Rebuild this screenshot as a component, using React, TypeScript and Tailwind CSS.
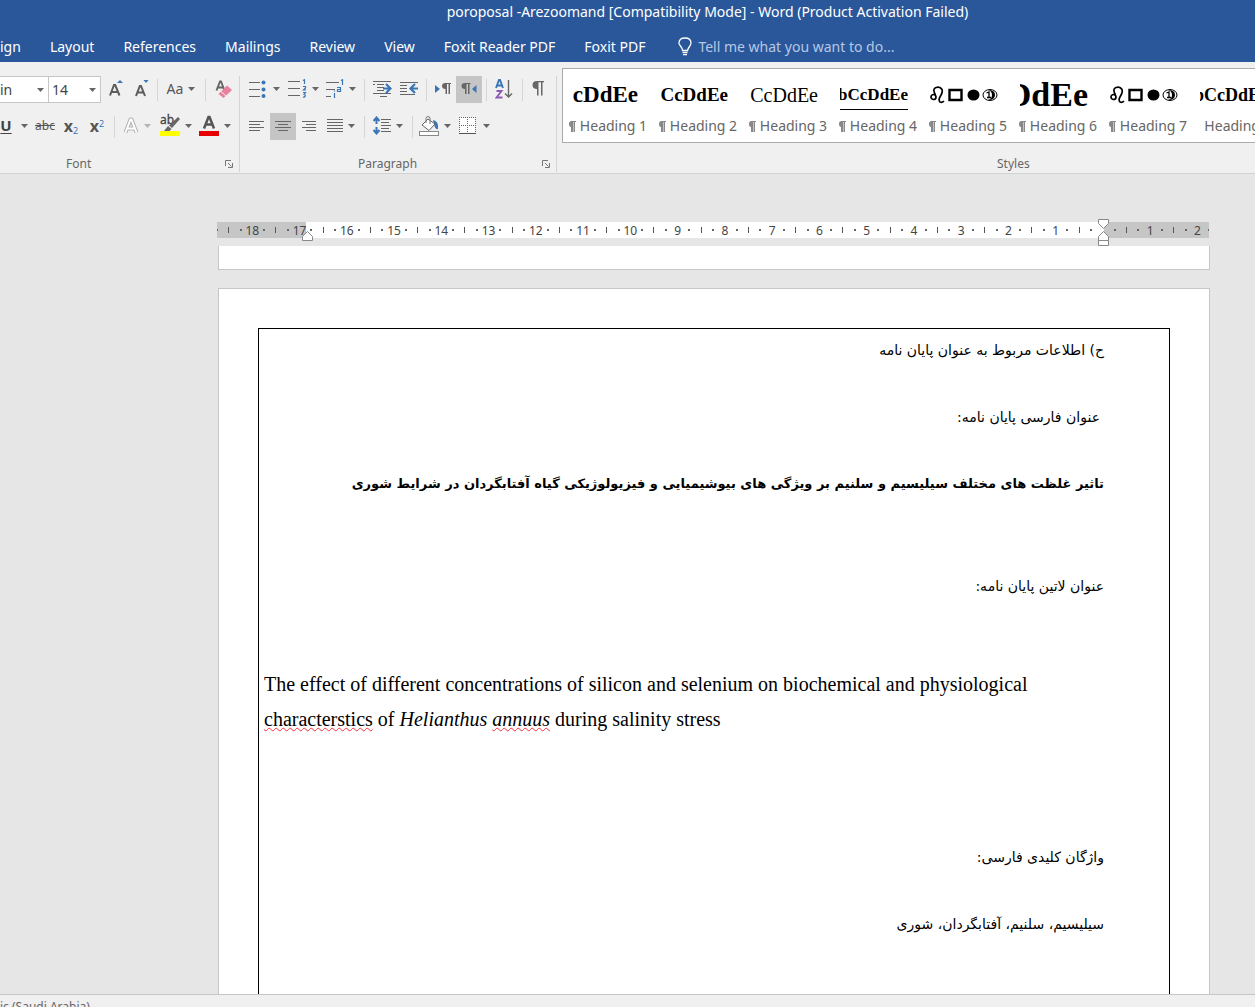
import type { ReactNode } from "react";
import clsx from "clsx";

const tabs = ["ign", "Layout", "References", "Mailings", "Review", "View", "Foxit Reader PDF", "Foxit PDF"];

const rulerNumbers = [18, 17, 16, 15, 14, 13, 12, 11, 10, 9, 8, 7, 6, 5, 4, 3, 2, 1, 0, 1, 2];

const styles = [
  { name: "Heading 1", preview: "cDdEe", look: "text-[23px] font-bold", mark: true },
  { name: "Heading 2", preview: "CcDdEe", look: "text-[19px] font-bold", mark: true },
  { name: "Heading 3", preview: "CcDdEe", look: "text-[20px]", mark: true },
  { name: "Heading 4", preview: "bCcDdEe", look: "text-[17px] font-bold border-b border-black", mark: true },
  { name: "Heading 5", preview: "symbols", look: "", mark: true },
  { name: "Heading 6", preview: "DdEe", look: "text-[34px] font-bold", mark: true },
  { name: "Heading 7", preview: "symbols", look: "", mark: true },
  { name: "Heading 8", preview: "bCcDdEe", look: "text-[18px] font-bold", mark: false },
];

function Caret({ dim = false }: { dim?: boolean }) {
  return (
    <svg width="7" height="4" viewBox="0 0 7 4" className={clsx("shrink-0", dim ? "fill-[#b5b5b5]" : "fill-[#666]")}>
      <path d="M0 0h7L3.500 4z" />
    </svg>
  );
}

function Tool({ label, className, active, children }: { label: string; className: string; active?: boolean; children: ReactNode }) {
  return (
    <button
      type="button"
      aria-label={label}
      aria-pressed={active}
      className={clsx("flex h-[27px] shrink-0 items-center justify-center pb-[2px]", active && "bg-[#c5c5c5]", className)}
    >
      {children}
    </button>
  );
}

function Separator() {
  return (
    <div className="flex w-2 shrink-0 justify-center">
      <div className="h-[22px] w-px bg-[#d5d5d5]" />
    </div>
  );
}

// Horizontal strokes used by the alignment icons
function Lines({ rows, width = 16, height = 14 }: { rows: number[][]; width?: number; height?: number }) {
  return (
    <svg width={width} height={height} viewBox={`0 0 ${width} ${height}`} fill="#666">
      {rows.map(([x, y, w]) => (
        <rect key={`${x}-${y}`} x={x} y={y} width={w} height="1" />
      ))}
    </svg>
  );
}

function Launcher({ label }: { label: string }) {
  return (
    <button type="button" aria-label={label} className="flex size-4 items-center justify-center">
      <svg width="8" height="8" viewBox="0 0 8 8" fill="none" stroke="#777">
        <path d="M.5 6V.5H6M3 3l3.500 3.500M7.500 3v4.500H3" />
      </svg>
    </button>
  );
}

function FontGroup() {
  return (
    <section className="flex w-60 shrink-0 flex-col border-r border-[#d5d5d5]">
      <div className="flex h-[27px] items-center">
        <div className="relative h-full w-[49px] border-y border-r border-[#c6c6c6] bg-white">
          <select aria-label="Font" className="h-full w-full appearance-none text-[14px] text-[#444]">
            <option>in</option>
          </select>
          <span className="pointer-events-none absolute inset-y-0 right-1 flex items-center">
            <Caret />
          </span>
        </div>
        <div className="relative h-full w-[52px] border-y border-r border-[#c6c6c6] bg-white">
          <select aria-label="Font size" className="h-full w-full appearance-none pl-[3px] text-[14px] text-[#444]">
            <option>14</option>
          </select>
          <span className="pointer-events-none absolute inset-y-0 right-1 flex items-center">
            <Caret />
          </span>
        </div>
        <Tool label="Increase font size" className="w-[30px]">
          <svg width="14" height="17" viewBox="0 0 14 17">
            <path d="M1 15.500 5 5h1.200L10.500 15.500M2.500 12h6.500" fill="none" stroke="#5c5c5c" strokeWidth="2" />
            <path d="M8 3h6l-3-3z" fill="#3a76b5" />
          </svg>
        </Tool>
        <Tool label="Decrease font size" className="w-[22px]">
          <svg width="14" height="17" viewBox="0 0 14 17">
            <path d="M1 16 4.800 6h1.200L10 16M2.300 12.500h6.200" fill="none" stroke="#5c5c5c" strokeWidth="2" />
            <path d="M8.500 0h5L11 3z" fill="#3a76b5" />
          </svg>
        </Tool>
        <Separator />
        <Tool label="Change case" className="w-10 gap-[5px] text-[14px] text-[#555]">
          Aa
          <Caret />
        </Tool>
        <Separator />
        <Tool label="Clear formatting" className="w-[30px]">
          <svg width="18" height="18" viewBox="0 0 18 18">
            <path d="M1.500 10.500 5 1.500h1l3.500 9M3 7.500h5" fill="none" stroke="#666" strokeWidth="1.900" />
            <path d="m3.500 14 8.500-8.500 5 4.500-8.500 8z" fill="#e8829c" />
            <path d="m6 11.500 5 4.500" stroke="#f0f0f0" />
          </svg>
        </Tool>
      </div>

      <div className="mt-[10px] flex h-[27px] items-center">
        <Tool label="Underline" className="w-3 text-[15px] font-bold text-[#444] underline underline-offset-2">
          U
        </Tool>
        <Tool label="Underline options" className="w-5 pl-1">
          <Caret />
        </Tool>
        <Tool label="Strikethrough" className="w-[26px] text-[12px] text-[#555] line-through">
          abc
        </Tool>
        <Tool label="Subscript" className="w-[26px]">
          <span className="text-[16px] leading-4 font-bold text-[#555]">
            x<sub className="text-[9px] font-normal text-[#3a76b5]">2</sub>
          </span>
        </Tool>
        <Tool label="Superscript" className="w-[26px]">
          <span className="text-[16px] leading-4 font-bold text-[#555]">
            x<sup className="text-[9px] font-normal text-[#3a76b5]">2</sup>
          </span>
        </Tool>
        <Separator />
        <Tool label="Text effects" className="w-[38px] gap-[5px]">
          <svg width="16" height="18" viewBox="0 0 16 18" fill="none" strokeLinejoin="round">
            <path d="M2.500 15.500 7.500 2.500h1l5 13M4.500 11.500h7" stroke="#b3b3b3" strokeWidth="4" />
            <path d="M2.500 15.500 7.500 2.500h1l5 13M4.500 11.500h7" stroke="#fff" strokeWidth="2" />
          </svg>
          <Caret dim />
        </Tool>
        <Tool label="Highlight" className="w-10 gap-[5px]">
          <svg width="20" height="21" viewBox="0 0 20 21" className="overflow-visible">
            <text x="0" y="9" fontSize="12" fill="#444" stroke="#444" strokeWidth=".3">ab</text>
            <path d="m18 2 2 2-8 9-3-2.500zM8 11l3.500 3L9.500 16H4z" fill="#666" />
            <rect y="16" width="20" height="5" fill="#ff0" />
          </svg>
          <Caret />
        </Tool>
        <Tool label="Font colour" className="w-[38px] gap-[5px]">
          <svg width="20" height="21" viewBox="0 0 20 21">
            <path d="M5 13.500 9.500 2h1L15 13.500M6.500 9.500h7" fill="none" stroke="#555" strokeWidth="2.500" />
            <rect y="16" width="20" height="5" fill="#e80000" />
          </svg>
          <Caret />
        </Tool>
      </div>

      <div className="mt-auto flex items-center justify-between pr-[2px] pl-[66px] text-[12px] leading-4 text-[#666]">
        Font
        <Launcher label="Font settings" />
      </div>
    </section>
  );
}

function ParagraphGroup() {
  return (
    <section className="flex w-[317px] shrink-0 flex-col border-r border-[#d5d5d5]">
      <div className="flex h-[27px] items-center pl-1">
        <Tool label="Bullets" className="w-10 gap-[6px]">
          <svg width="18" height="18" viewBox="0 0 18 18">
            <path d="M0 2.500h11M0 9.500h11M0 16.500h11" stroke="#666" />
            <g fill="#3a76b5">
              <circle cx="14.500" cy="2.500" r="2" />
              <circle cx="14.500" cy="9.500" r="2" />
              <circle cx="14.500" cy="16" r="2" />
            </g>
          </svg>
          <Caret />
        </Tool>
        <Tool label="Numbering" className="w-[38px] gap-[5px]">
          <svg width="19" height="19" viewBox="0 0 19 19" fill="none">
            <path d="M0 2.500h12M0 9.500h12M0 16.500h12" stroke="#666" />
            <path
              d="M15 1.500 16.500.7V5M15 7.500h2.500v1.500L15.500 11H18M15 13.500h2.500l-1.500 2q2 .5 1 2-1 1-2 .5"
              stroke="#3a76b5"
              strokeWidth="1.200"
            />
          </svg>
          <Caret />
        </Tool>
        <Tool label="Multilevel list" className="w-[38px] gap-[5px]">
          <svg width="18" height="20" viewBox="0 0 18 20" fill="none">
            <path d="M0 3.500h13M0 10.500h9M0 17.500h5" stroke="#666" />
            <path
              d="M15 1.500 16.500.7V6M11 8.500h3.500V12.500H11.500V10.500h3M8.500 14v5M8.500 11.500v1"
              stroke="#3a76b5"
              strokeWidth="1.200"
            />
          </svg>
          <Caret />
        </Tool>
        <Separator />
        <Tool label="Decrease indent" className="w-7">
          <svg width="19" height="16" viewBox="0 0 19 16" fill="none">
            <path d="M0 .5h18M4 3.500h7M4 6.500h7M4 9.500h7M0 12.500h18M7 15.500h7M0 3.500h2" stroke="#666" />
            <path d="M10 7.500h7M13 3l4.500 4.500L13 12" stroke="#3a76b5" strokeWidth="2.200" />
          </svg>
        </Tool>
        <Tool label="Increase indent" className="w-[26px]">
          <svg width="19" height="16" viewBox="0 0 19 16" fill="none">
            <path d="M0 1.500h18M0 4.500h7M0 7.500h7M0 10.500h7M0 13.500h15" stroke="#666" />
            <path d="M18 7.500h-7M15 3l-4.500 4.500L15 12" stroke="#3a76b5" strokeWidth="2.200" />
          </svg>
        </Tool>
        <Separator />
        <Tool label="Left-to-right" className="w-[26px]">
          <svg width="16" height="12" viewBox="0 0 16 12">
            <path d="M0 2v8l5-4z" fill="#3a76b5" />
            <path d="M10.500 6Q7 6 7 3t3.500-3H16v1h-1v10h-1.500V1H12v10h-1.500z" fill="#666" />
          </svg>
        </Tool>
        <Tool label="Right-to-left" className="w-[26px]" active>
          <svg width="16" height="12" viewBox="0 0 16 12">
            <path d="M15.500 2v8L11 6z" fill="#3a76b5" />
            <path d="M4 6Q.5 6 .5 3T4 0h5.500v1h-1v10H7V1H5.500v10H4z" fill="#666" />
          </svg>
        </Tool>
        <Separator />
        <Tool label="Sort" className="w-7">
          <svg width="18" height="20" viewBox="0 0 18 20" fill="none">
            <path d="M1 9 4 1h1l3 8M2 6.500h5" stroke="#3a76b5" strokeWidth="1.900" />
            <path d="M1.500 12h5l-5 6.500h6" stroke="#8e58b5" strokeWidth="1.900" />
            <path d="M13.500 1v17M10 14.500l3.500 3.500 3.500-3.500" stroke="#666" strokeWidth="1.400" />
          </svg>
        </Tool>
        <Separator />
        <Tool label="Show paragraph marks" className="w-6">
          <svg width="12" height="15" viewBox="0 0 12 15">
            <path d="M5 8Q.5 8 .5 4T5 0h7v1.200h-1.500V14.500H9V1.200H6.500V14.500H5z" fill="#666" />
          </svg>
        </Tool>
      </div>

      <div className="mt-[10px] flex h-[27px] items-center pl-1">
        <Tool label="Align left" className="w-[26px]">
          <Lines rows={[[0, 1, 15], [0, 4, 11], [0, 7, 15], [0, 10, 11]]} height={12} />
        </Tool>
        <Tool label="Centre" className="w-[26px]" active>
          <Lines rows={[[0, 1, 16], [3, 4, 10], [0, 7, 16], [3, 10, 10]]} height={12} />
        </Tool>
        <Tool label="Align right" className="w-[26px]">
          <Lines rows={[[1, 1, 14], [5, 4, 10], [1, 7, 14], [5, 10, 10]]} height={12} />
        </Tool>
        <Tool label="Justify" className="w-[38px] gap-[5px]">
          <Lines rows={[[0, 0, 16], [0, 3, 16], [0, 6, 16], [0, 9, 16], [0, 12, 16]]} height={14} />
          <Caret />
        </Tool>
        <Separator />
        <Tool label="Line spacing" className="w-10 gap-[5px]">
          <svg width="18" height="19" viewBox="0 0 18 19" fill="none">
            <path d="M3.500 1.500V8M.5 5l3-3.500 3 3.500M3.500 11v6.500M.5 14l3 3.500 3-3.500" stroke="#3a76b5" strokeWidth="2" />
            <path d="M8 3.500h10M8 6.500h8M8 9.500h10M8 12.500h8M8 15.500h10" stroke="#666" />
          </svg>
          <Caret />
        </Tool>
        <Separator />
        <Tool label="Shading" className="w-[38px] gap-[5px]">
          <svg width="20" height="20" viewBox="0 0 20 20">
            <path d="M14 4q6 1 5 9-3 1-4-5z" fill="#3a76b5" />
            <path d="m3 9 6-6 7 5-6 6.500z" fill="#fff" stroke="#666" />
            <path d="M7 7V2.500Q7 .5 9 .5t2 2V8" fill="none" stroke="#777" />
            <rect x=".5" y="15.500" width="19" height="4" fill="#fff" stroke="#888" />
          </svg>
          <Caret />
        </Tool>
        <Tool label="Borders" className="w-10 gap-[7px]">
          <svg width="17" height="17" viewBox="0 0 17 17" fill="none">
            <path d="M.5.5h16v15H.5z" fill="#fff" />
            <path d="M0 .5h17M0 8.500h17M.5 0v16M8.500 0v16M16.500 0v16" stroke="#666" strokeDasharray="1 1" />
            <path d="M0 16.500h17" stroke="#555" />
          </svg>
          <Caret />
        </Tool>
      </div>

      <div className="mt-auto flex items-center justify-between pr-[2px] pl-[118px] text-[12px] leading-4 text-[#666]">
        Paragraph
        <Launcher label="Paragraph settings" />
      </div>
    </section>
  );
}

function StylePreview({ preview, look }: { preview: string; look: string }) {
  if (preview === "symbols") {
    return (
      <span className="flex w-[68px] items-center justify-between text-black">
        <svg width="16" height="18" viewBox="0 0 16 18" fill="none" stroke="currentColor" strokeWidth="1.700">
          <circle cx="3.500" cy="11" r="2.500" />
          <path d="M5.500 9Q2 3 6 1.500t6 2Q13 6 10.500 10T10 16q2 1 4-1" />
        </svg>
        <svg width="16" height="14" viewBox="0 0 16 14" fill="none" stroke="currentColor" strokeWidth="2.400">
          <path d="M1.500 2h12v10h-12z" />
        </svg>
        <svg width="13" height="14" viewBox="0 0 13 14">
          <ellipse cx="6.500" cy="7" rx="6" ry="5.500" />
        </svg>
        <svg width="16" height="14" viewBox="0 0 16 14" fill="none" stroke="currentColor">
          <ellipse cx="8" cy="7" rx="7" ry="5.500" />
          <path d="M6 2q4 1 4 5t-4 5q7 0 7-5T6 2z" fill="currentColor" stroke="none" />
          <path d="M4.500 5 7 4v6M5 9.500h4" strokeWidth="1.300" />
        </svg>
      </span>
    );
  }
  return (
    <span
      className={clsx("flex w-[68px] justify-end overflow-hidden font-['Liberation_Serif',serif] leading-7 whitespace-nowrap text-black", look)}
    >
      {preview}
    </span>
  );
}

function StylesGroup() {
  return (
    <section className="flex min-w-0 flex-1 flex-col pl-[5px]">
      <div className="-mt-2 flex h-[75px] overflow-hidden border-y border-l border-[#ababab] bg-white">
        {styles.map((s) => (
          <button key={s.name} type="button" className="flex w-[90px] shrink-0 flex-col items-center pt-[11px]">
            <span className="flex h-[30px] items-center pr-2">
              <StylePreview preview={s.preview} look={s.look} />
            </span>
            <span className="mt-[6px] flex items-center gap-1 text-[14px] leading-5 whitespace-nowrap text-[#666]">
              {s.mark && (
                <svg width="7" height="11" viewBox="0 0 7 11" fill="#888">
                  <path d="M2 6Q0 6 0 3t2.500-3H7v1H6v10H4.500V1H4v10H2z" />
                </svg>
              )}
              {s.name}
            </span>
          </button>
        ))}
      </div>
      <div className="mt-auto pl-[435px] text-[12px] leading-4 text-[#666]">Styles</div>
    </section>
  );
}

function Ruler() {
  return (
    <div className="relative mr-px -ml-px h-4">
      <div className="flex h-full overflow-hidden bg-[linear-gradient(to_right,#c6c6c6_9%,#fff_9%,#fff_89.400%,#c6c6c6_89.400%)]">
        <div className="-mx-[6px] flex flex-1 items-center text-[12px] text-[#444]">
          {rulerNumbers.map((n, i) => (
            <div key={i} className="grid flex-4 grid-cols-4 items-center justify-items-center">
              <i className="size-[2px] bg-[#666]" />
              <i className="h-[6px] w-px bg-[#555]" />
              <i className="size-[2px] bg-[#666]" />
              <span className="flex w-0 justify-center pt-px leading-4">{n > 0 ? n : ""}</span>
            </div>
          ))}
          <div className="flex flex-1 justify-center">
            <i className="size-[2px] bg-[#666]" />
          </div>
        </div>
      </div>
      <svg width="11" height="10" viewBox="0 0 11 10" className="absolute top-[9px] left-[8.600%]" fill="#fff" stroke="#888">
        <path d="M.5 9.500v-4l5-5 5 5v4z" />
      </svg>
      <svg width="11" height="28" viewBox="0 0 11 28" className="absolute -top-[3px] left-[88.800%]" fill="#fff" stroke="#888">
        <path d="M.5.5h10v4l-5 5-5-5zM.5 21.500v-4l5-5 5 5v4zM.5 21.500h10v5H.5z" />
      </svg>
    </div>
  );
}

function DocumentPage() {
  return (
    <article className="flex-1 border-x border-t border-[#c6c6c6] bg-white px-[39px] pt-[39px] text-black">
      <div className="h-full border-x border-t border-black pt-1 pr-[65px] pl-[5px]">
        <div dir="rtl" lang="fa" className="font-['DejaVu_Sans',sans-serif] text-[14px] leading-[34px]">
          <p>ح) اطلاعات مربوط به عنوان پایان نامه</p>
          <p className="mt-[33px] pr-1">عنوان فارسی پایان نامه:</p>
          <p className="mt-[33px] text-[13px] font-bold">
            تاثیر غلظت های مختلف سیلیسیم و سلنیم بر ویژگی های بیوشیمیایی و فیزیولوژیکی گیاه آفتابگردان در شرایط شوری
          </p>
          <p className="mt-[68px]">عنوان لاتین پایان نامه:</p>
        </div>
        <p className="mt-16 max-w-[800px] font-['Liberation_Serif',serif] text-[20px] leading-[35px]">
          The effect of different concentrations of silicon and selenium on biochemical and physiological{" "}
          <span className="underline decoration-red-500 decoration-wavy decoration-1">characterstics</span> of{" "}
          <em>
            Helianthus <span className="underline decoration-red-500 decoration-wavy decoration-1">annuus</span>
          </em>{" "}
          during salinity stress
        </p>
        <div dir="rtl" lang="fa" className="mt-[103px] font-['DejaVu_Sans',sans-serif] text-[14px] leading-[34px]">
          <p>واژگان کلیدی فارسی:</p>
          <p className="mt-[33px]">سیلیسیم، سلنیم، آفتابگردان، شوری</p>
        </div>
      </div>
    </article>
  );
}

export default function App() {
  return (
    <div className="flex h-screen flex-col overflow-hidden bg-[#e6e6e6] font-['Noto_Sans','Open_Sans',sans-serif]">
      <header className="bg-[#2a579a] text-[14px] text-white">
        <h1 className="h-6 pl-40 text-center leading-6">poroposal -Arezoomand [Compatibility Mode] - Word (Product Activation Failed)</h1>
        <nav className="flex h-[38px] items-center gap-[29px] pt-[6px] whitespace-nowrap">
          {tabs.map((tab) => (
            <button key={tab} type="button">
              {tab}
            </button>
          ))}
          <label className="ml-1 flex items-center gap-[6px]">
            <svg width="14" height="19" viewBox="0 0 14 19" fill="none" stroke="#fff" strokeWidth="1.300">
              <path d="M4.500 13.500q0-2-2-4.500T1 6q0-5 6-5t6 5q0 1.500-1.500 3.500t-2 4z" />
              <path d="M4.500 15.500h5M5 17.700h4" />
            </svg>
            <input
              aria-label="Tell me what you want to do"
              placeholder="Tell me what you want to do..."
              className="w-60 bg-transparent outline-none placeholder:text-[#b5c8e6]"
            />
          </label>
        </nav>
      </header>

      <div className="flex h-28 shrink-0 border-b border-[#d2d2d2] bg-[#f0f0f0] pt-[14px] pb-px">
        <FontGroup />
        <ParagraphGroup />
        <StylesGroup />
      </div>

      <main className="flex min-h-0 flex-1 flex-col overflow-hidden pt-12 pr-[45px] pl-[218px]">
        <Ruler />
        <div className="mt-2 h-6 shrink-0 border-x border-b border-[#c6c6c6] bg-white" />
        <div className="mt-[18px] flex min-h-0 flex-1 flex-col">
          <DocumentPage />
        </div>
      </main>

      <footer className="h-[13px] shrink-0 overflow-hidden border-t border-[#c6c6c6] bg-[#f0f0f0] text-[12px] leading-6 text-[#666]">
        ic (Saudi Arabia)
      </footer>
    </div>
  );
}
